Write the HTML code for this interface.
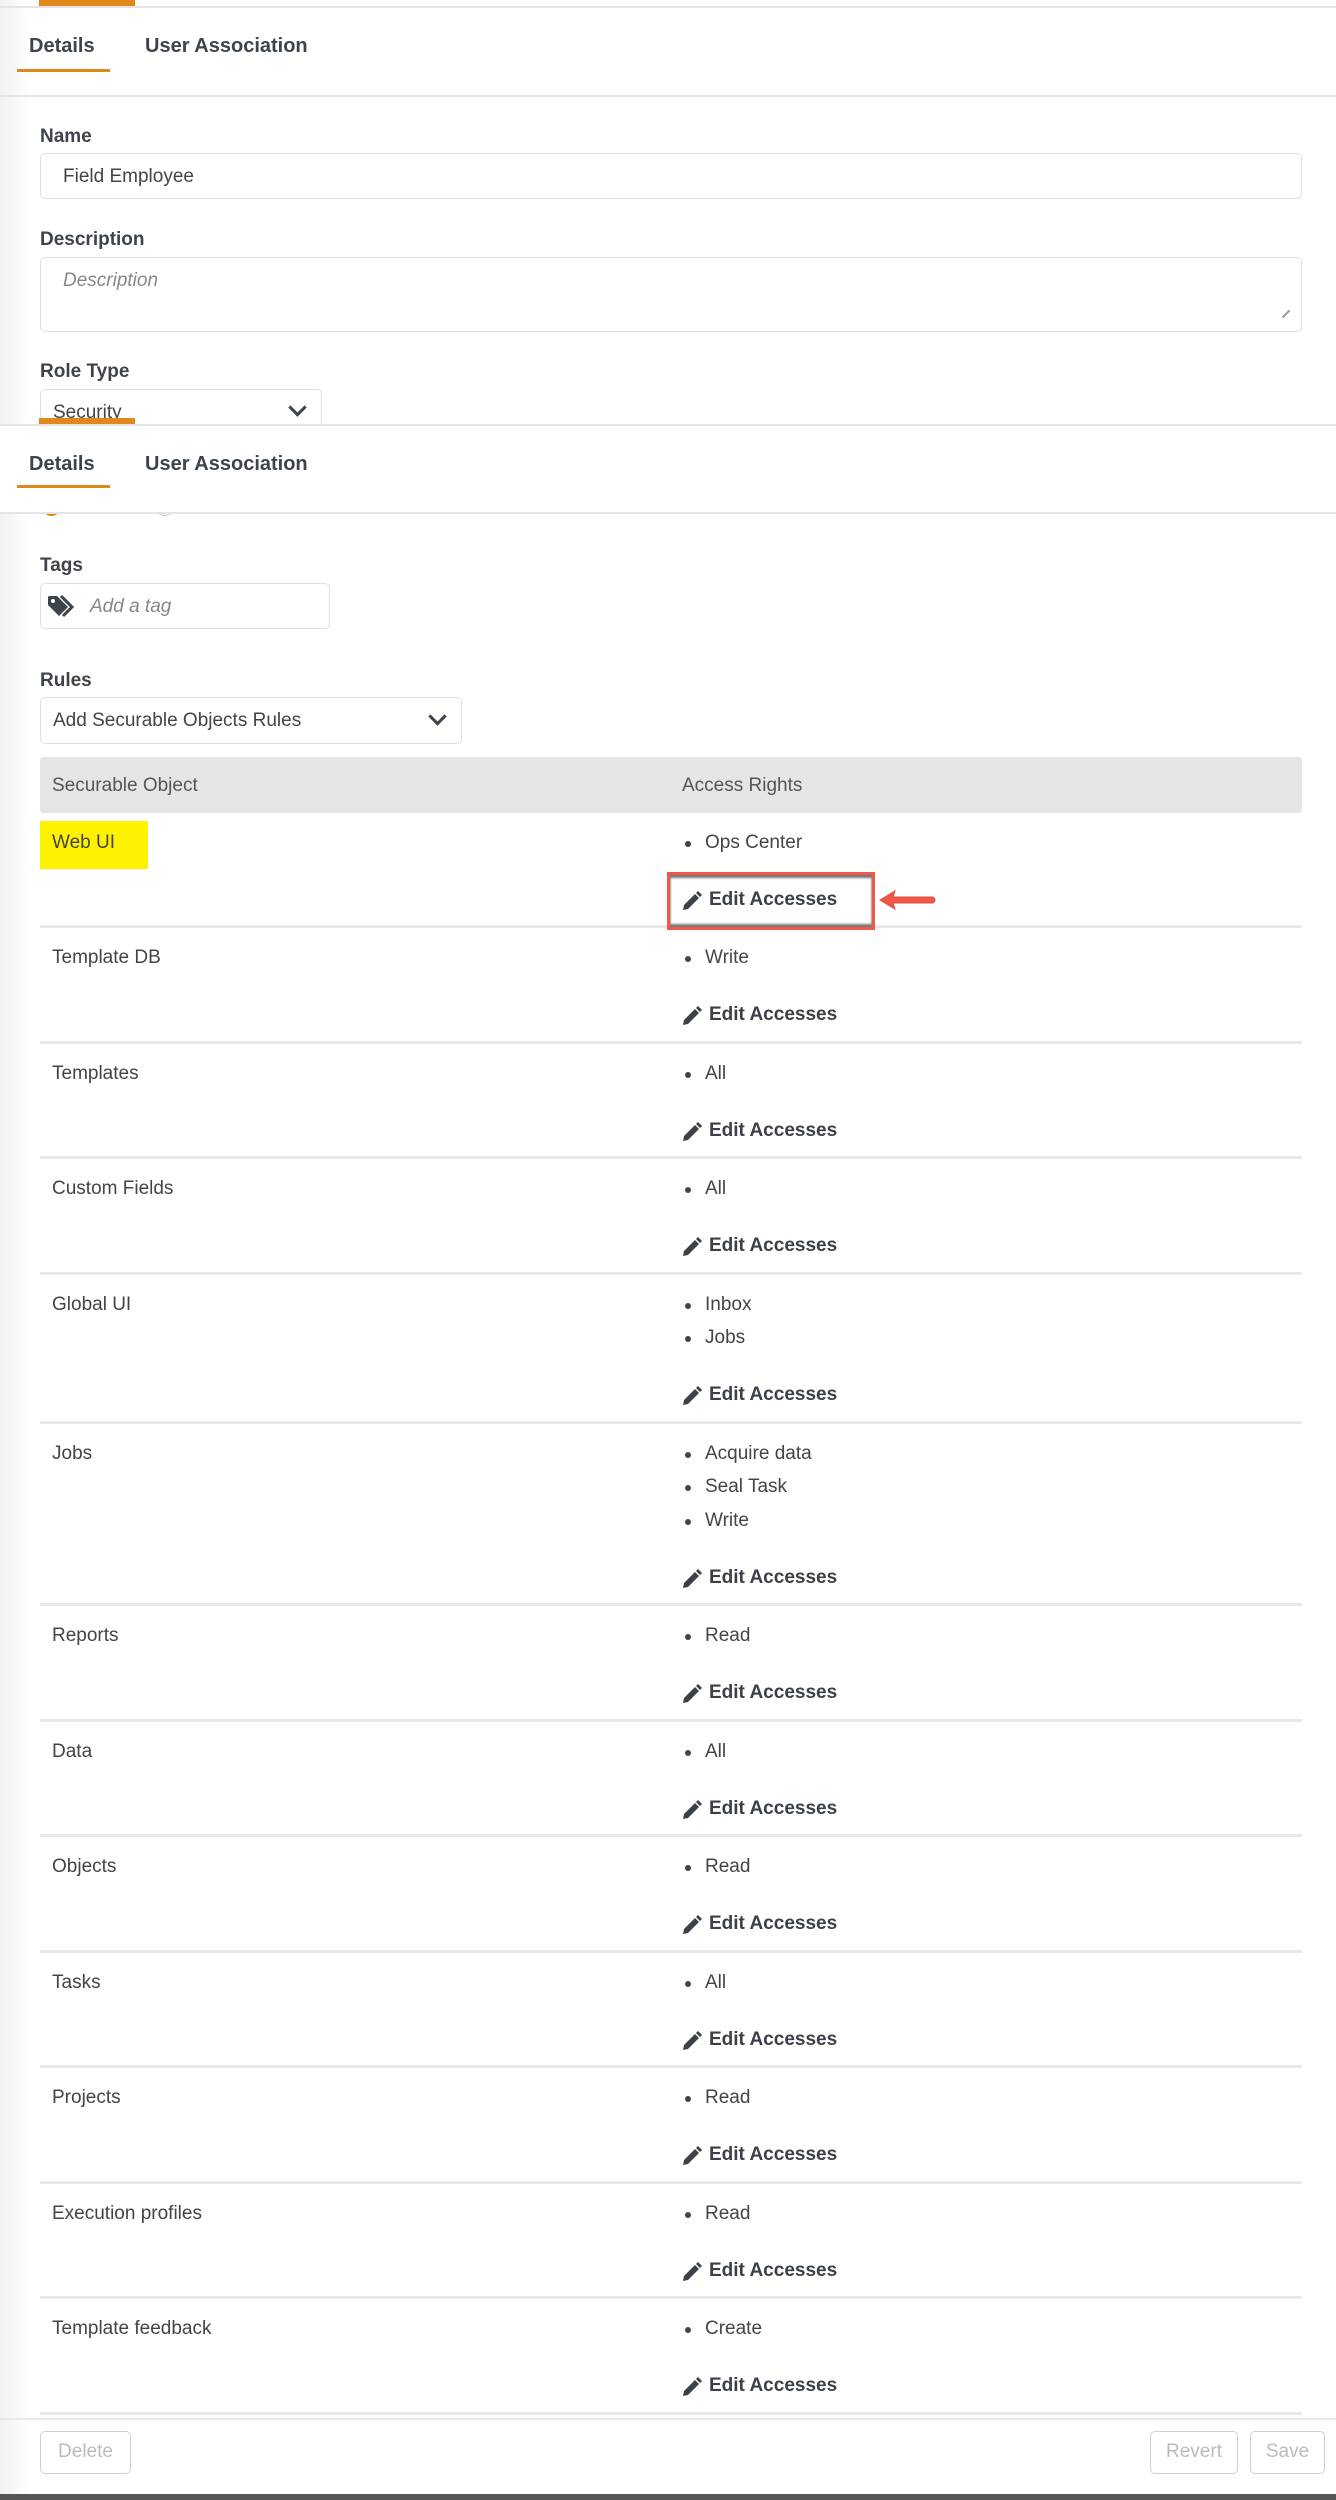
<!DOCTYPE html>
<html><head><meta charset="utf-8"><style>
*{box-sizing:border-box;margin:0;padding:0}
body{width:1336px;height:2500px;position:relative;background:#fff;font-family:"Liberation Sans",sans-serif;color:#3f444a;overflow:hidden}
.abs{position:absolute}
.leftshade{position:absolute;left:0;top:0;width:30px;height:2500px;background:linear-gradient(to right,#f1f1f1,#fff)}
.bar{position:absolute;background:#e0891b}
.hl{position:absolute;left:0;width:1336px;height:2px;background:#e4e4e4}
.tab{position:absolute;font-weight:bold;font-size:20px;color:#3d444b}
.lbl{position:absolute;left:40px;font-weight:bold;font-size:19px;color:#3d444b}
.inp{position:absolute;border:1.5px solid #e0e0e0;border-radius:5px;background:#fff;font-size:19px;color:#444}
.chev{position:absolute;width:13px;height:13px;border-right:3px solid #3d444b;border-bottom:3px solid #3d444b;transform:rotate(45deg)}
.row{position:absolute;left:40px;width:1262px;border-bottom:3px solid #e8e8e8}
.obj{position:absolute;left:12px;top:13px;line-height:34px;font-size:19px;color:#444}
.rt{position:absolute;left:642px;top:13px;font-size:19px;color:#444}
.rt div{line-height:33.5px;padding-left:23px;position:relative}
.rt div:before{content:"";position:absolute;left:3px;top:15px;width:6px;height:6px;border-radius:50%;background:#444}
.ed{position:absolute;left:642px;font-weight:bold;font-size:19px;color:#3b4148;line-height:34px;padding-left:27px}
.ed svg{position:absolute;left:0;top:8px}
.btn{position:absolute;border:1.5px solid #d0d0d0;border-radius:5px;color:#bbb;font-size:19px;text-align:center;line-height:40px;height:43px;top:2431px}
</style></head><body>
<div class="leftshade"></div>
<div class="bar" style="left:39px;top:0;width:96px;height:6px"></div>
<div class="hl" style="top:6px"></div>
<div class="tab" style="left:29px;top:35px">Details</div>
<div class="tab" style="left:145px;top:35px">User Association</div>
<div class="bar" style="left:17px;top:69px;width:93px;height:3px"></div>
<div class="hl" style="top:95px"></div>

<div class="lbl" style="top:126px">Name</div>
<div class="inp" style="left:40px;top:153px;width:1262px;height:46px;padding:12px 22px">Field Employee</div>
<div class="lbl" style="top:229px">Description</div>
<div class="inp" style="left:40px;top:257px;width:1262px;height:75px;padding:12px 22px;color:#888;font-style:italic">Description</div>
<div class="abs" style="left:1281px;top:313px;width:10px;height:2px;background:#999;transform:rotate(-45deg)"></div>
<div class="lbl" style="top:361px">Role Type</div>
<div class="inp" style="left:40px;top:389px;width:282px;height:50px;padding:12px 12px">Security</div>
<div class="chev" style="left:291px;top:401px"></div>

<div class="abs" style="left:42px;top:497px;width:19px;height:19px;border:2px solid #e0891b;border-radius:50%"></div>
<div class="abs" style="left:72px;top:497px;font-size:19px;color:#444">Private</div>
<div class="abs" style="left:155px;top:497px;width:19px;height:19px;border:1.5px solid #ccc;border-radius:50%"></div>
<div class="abs" style="left:182px;top:497px;font-size:19px;color:#444">Public</div>

<div class="abs" style="left:0;top:424px;width:1336px;height:88px;background:#fff"></div>
<div class="bar" style="left:39px;top:418px;width:96px;height:6px"></div>
<div class="hl" style="top:424px"></div>
<div class="tab" style="left:29px;top:453px">Details</div>
<div class="tab" style="left:145px;top:453px">User Association</div>
<div class="bar" style="left:17px;top:485px;width:93px;height:3px"></div>
<div class="hl" style="top:512px"></div>

<div class="lbl" style="top:555px">Tags</div>
<div class="inp" style="left:40px;top:583px;width:290px;height:46px;padding:12px 0 0 49px;color:#888;font-style:italic">Add a tag</div>
<svg class="abs" style="left:47px;top:595px" width="30" height="24" viewBox="0 0 30 24"><path d="M1 2 V10 L12 21 L21 12 L10 1 H2 Z" fill="#3d444b"/><circle cx="6" cy="6" r="2" fill="#fff"/><path d="M14 1 L25 12 L16 21" fill="none" stroke="#3d444b" stroke-width="3"/></svg>

<div class="lbl" style="top:670px">Rules</div>
<div class="inp" style="left:40px;top:697px;width:422px;height:47px;padding:12px 12px">Add Securable Objects Rules</div>
<div class="chev" style="left:431px;top:710px"></div>

<div class="abs" style="left:40px;top:757px;width:1262px;height:56px;background:#e5e5e5;border-radius:3px"></div>
<div class="abs" style="left:52px;top:775px;font-size:19px;color:#555">Securable Object</div>
<div class="abs" style="left:682px;top:775px;font-size:19px;color:#555">Access Rights</div>

<div class="abs" style="left:40px;top:821px;width:108px;height:48px;background:#fff200"></div>

<div class="row" style="top:813px;height:115px"><div class="obj">Web UI</div><div class="rt"><div>Ops Center</div></div><div class="ed" style="top:70px"><svg width="20" height="20" viewBox="0 0 20 20"><path d="M1 19 L2 14 L13 3 L17 7 L6 18 Z M14 2 L16 0 L20 4 L18 6 Z" fill="#3b4148"/></svg>Edit Accesses</div></div>
<div class="abs" style="left:667px;top:872px;width:208px;height:58px;border:3px solid #f0584a;box-shadow:inset 0 3px 2px #777,inset 0 -3px 2px #777"></div>
<svg class="abs" style="left:878px;top:888px" width="62" height="26" viewBox="0 0 62 26"><path d="M2 12 L17 3 L15 9 L55 9 Q59 12 55 15 L15 15 L17 21 Z" fill="#f0584a" stroke="#e04a3c" stroke-width="1"/></svg>

<div id="rows"></div>

<div class="hl" style="top:2418px;background:#e8e8e8"></div>
<div class="btn" style="left:40px;width:91px">Delete</div>
<div class="btn" style="left:1150px;width:88px">Revert</div>
<div class="btn" style="left:1250px;width:75px">Save</div>
<div class="abs" style="left:0;top:2494px;width:1336px;height:6px;background:#555"></div>

<script>
var data=[["Template DB",["Write"]],["Templates",["All"]],["Custom Fields",["All"]],["Global UI",["Inbox","Jobs"]],["Jobs",["Acquire data","Seal Task","Write"]],["Reports",["Read"]],["Data",["All"]],["Objects",["Read"]],["Tasks",["All"]],["Projects",["Read"]],["Execution profiles",["Read"]],["Template feedback",["Create"]]];
var y=928,h="";
var pen='<svg width="20" height="20" viewBox="0 0 20 20"><path d="M1 19 L2 14 L13 3 L17 7 L6 18 Z M14 2 L16 0 L20 4 L18 6 Z" fill="#3b4148"/></svg>';
data.forEach(function(d){var n=d[1].length;var ht=115.5+(n-1)*33.5;
h+='<div class="row" style="top:'+y+'px;height:'+ht+'px"><div class="obj">'+d[0]+'</div><div class="rt">'+d[1].map(function(s){return '<div>'+s+'</div>'}).join('')+'</div><div class="ed" style="top:'+(70+(n-1)*33.5)+'px">'+pen+'Edit Accesses</div></div>';
y+=ht;});
document.getElementById('rows').outerHTML=h;
</script>
</body></html>
